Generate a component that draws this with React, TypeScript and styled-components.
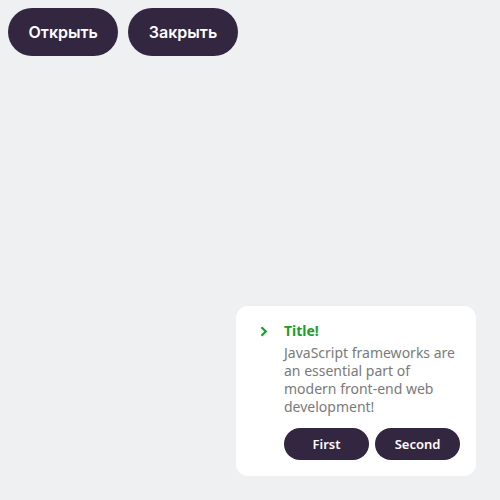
import React from "react";
import styled, { createGlobalStyle } from "styled-components";

const Global = createGlobalStyle`
  html, body { margin: 0; padding: 0; }
  body {
    background: #eff0f2;
    width: 500px;
    height: 500px;
    overflow: hidden;
    font-family: "Noto Sans", sans-serif;
  }
`;

const Page = styled.div`
  position: relative;
  width: 500px;
  height: 500px;
  box-sizing: border-box;
  padding: 8px;
`;

const Toolbar = styled.div`
  display: flex;
  gap: 10px;
`;

const PillButton = styled.button`
  height: 48px;
  padding: 0 20.5px;
  border: none;
  border-radius: 24px;
  background: #332641;
  color: #fff;
  font-family: "Inter", sans-serif;
  font-weight: 600;
  font-size: 16px;
  cursor: pointer;
`;

const Toast = styled.div`
  position: absolute;
  right: 24px;
  bottom: 24px;
  width: 240px;
  box-sizing: border-box;
  padding: 16px;
  background: #fff;
  border-radius: 12px;
  display: flex;
  gap: 8px;
`;

const IconCol = styled.div`
  width: 24px;
  flex: none;
  display: flex;
  justify-content: center;
  padding-top: 4px;
  height: 14px;
`;

const Body = styled.div`
  flex: 1;
  display: flex;
  flex-direction: column;
`;

const Title = styled.div`
  color: #1a9e2c;
  font-weight: 700;
  font-size: 14px;
  line-height: 18px;
`;

const Text = styled.div`
  color: #7a7a7a;
  font-size: 14px;
  line-height: 18px;
  margin-top: 4px;
`;

const Actions = styled.div`
  display: flex;
  gap: 6px;
  margin-top: 12px;
`;

const SmallButton = styled.button`
  flex: 1;
  height: 32px;
  border: none;
  border-radius: 16px;
  background: #332641;
  color: #fff;
  font-family: "Noto Sans", sans-serif;
  font-weight: 600;
  font-size: 13px;
  cursor: pointer;
`;

export default function App() {
  return (
    <>
      <Global />
      <Page>
        <Toolbar>
          <PillButton>Открыть</PillButton>
          <PillButton>Закрыть</PillButton>
        </Toolbar>
        <Toast>
          <IconCol>
            <svg width="8" height="11" viewBox="0 0 8 11">
              <path d="M1.5 1.2 L5.8 5.5 L1.5 9.8" fill="none" stroke="#1a9e2c" strokeWidth="2.2" />
            </svg>
          </IconCol>
          <Body>
            <Title>Title!</Title>
            <Text>JavaScript frameworks are an essential part of modern front-end web development!</Text>
            <Actions>
              <SmallButton>First</SmallButton>
              <SmallButton>Second</SmallButton>
            </Actions>
          </Body>
        </Toast>
      </Page>
    </>
  );
}
